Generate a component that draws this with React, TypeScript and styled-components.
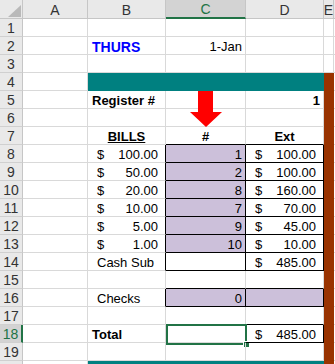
import React from "react";
import styled, { createGlobalStyle } from "styled-components";

const GlobalStyle = createGlobalStyle`
  html, body { margin: 0; padding: 0; background: #ffffff; overflow: hidden; }
  body { font-family: "Liberation Sans", Arial, sans-serif; }
`;

const GRID = "#d9d9d9";
const HEADER_BG = "#e9e9e9";
const HEADER_SEL = "#d3d3d3";
const HEADER_LINE = "#c6c6c6";
const EXCEL_GREEN = "#217346";
const TEAL = "#008080";
const BROWN = "#993300";
const LILAC = "#ccc0da";

type Col = "A" | "B" | "C" | "D" | "E" | "F";
const COLS: Col[] = ["A", "B", "C", "D", "E", "F"];

type CellDef = {
  text?: string;
  acct?: string;
  align?: "left" | "right" | "center";
  bold?: boolean;
  color?: string;
  underline?: boolean;
  indent?: number;
  size?: number;
  fill?: string;
  box?: boolean;
  selected?: boolean;
};

const acct = (v: string, box = true, fill?: string): CellDef => ({ acct: v, box, fill });
const num = (v: string): CellDef => ({ text: v, align: "right", box: true, fill: LILAC });

const brownE: Partial<Record<Col, CellDef>> = { E: { fill: BROWN } };

const SHEET: Record<number, Partial<Record<Col, CellDef>>> = {
  1: {},
  2: {
    B: { text: "THURS", bold: true, color: "#0000ff", size: 14 },
    C: { text: "1-Jan", align: "right" },
  },
  3: {},
  4: { B: { fill: TEAL }, C: { fill: TEAL }, D: { fill: TEAL }, ...brownE },
  5: {
    B: { text: "Register #", bold: true },
    D: { text: "1", bold: true, align: "right" },
    ...brownE,
  },
  6: { ...brownE },
  7: {
    B: { text: "BILLS", bold: true, underline: true, align: "center" },
    C: { text: "#", bold: true, align: "center" },
    D: { text: "Ext", bold: true, align: "center" },
    ...brownE,
  },
  8: { B: acct("100.00", false), C: num("1"), D: acct("100.00"), ...brownE },
  9: { B: acct("50.00", false), C: num("2"), D: acct("100.00"), ...brownE },
  10: { B: acct("20.00", false), C: num("8"), D: acct("160.00"), ...brownE },
  11: { B: acct("10.00", false), C: num("7"), D: acct("70.00"), ...brownE },
  12: { B: acct("5.00", false), C: num("9"), D: acct("45.00"), ...brownE },
  13: { B: acct("1.00", false), C: num("10"), D: acct("10.00"), ...brownE },
  14: {
    B: { text: "Cash Sub", indent: 9 },
    C: { box: true },
    D: acct("485.00"),
    ...brownE,
  },
  15: { ...brownE },
  16: {
    B: { text: "Checks", indent: 9 },
    C: num("0"),
    D: { box: true, fill: LILAC },
    ...brownE,
  },
  17: { ...brownE },
  18: {
    B: { text: "Total", bold: true },
    C: { selected: true },
    D: acct("485.00"),
    ...brownE,
  },
  19: { ...brownE },
  20: { B: { fill: TEAL }, C: { fill: TEAL }, D: { fill: TEAL }, ...brownE },
};

const ROWS = Array.from({ length: 20 }, (_, i) => i + 1);
const LAST_LABELLED_ROW = 19;
const SELECTED_ROW = 18;
const SELECTED_COL: Col = "C";

const getCell = (r: number, c: Col | undefined): CellDef => (c && SHEET[r]?.[c]) || {};

const Sheet = styled.div`
  position: relative;
  display: grid;
  grid-template-columns: 23px 65px 78px 80px 78px 10px 1fr;
  grid-auto-rows: 18px;
  grid-template-rows: 19px;
  width: 335px;
  height: 364px;
  overflow: hidden;
  background: #ffffff;
`;

const Corner = styled.div`
  position: relative;
  box-sizing: border-box;
  background: ${HEADER_BG};
  border-right: 1px solid ${HEADER_LINE};
  border-bottom: 1px solid ${HEADER_LINE};
  svg { position: absolute; right: 1px; bottom: 1px; }
`;

const ColHeader = styled.div<{ $selected?: boolean }>`
  box-sizing: border-box;
  display: flex;
  align-items: center;
  justify-content: center;
  padding-top: 1px;
  background: ${(p) => (p.$selected ? HEADER_SEL : HEADER_BG)};
  color: ${(p) => (p.$selected ? EXCEL_GREEN : "#333333")};
  border-right: 1px solid ${HEADER_LINE};
  border-bottom: ${(p) => (p.$selected ? `2px solid ${EXCEL_GREEN}` : `1px solid ${HEADER_LINE}`)};
  font-size: 14px;
  line-height: 14px;
  overflow: hidden;
`;

const RowHeader = styled.div<{ $selected?: boolean }>`
  box-sizing: border-box;
  display: flex;
  align-items: center;
  justify-content: center;
  background: ${(p) => (p.$selected ? HEADER_SEL : HEADER_BG)};
  color: ${(p) => (p.$selected ? EXCEL_GREEN : "#333333")};
  border-right: ${(p) => (p.$selected ? `2px solid ${EXCEL_GREEN}` : `1px solid ${HEADER_LINE}`)};
  border-bottom: 1px solid #d0d0d0;
  font-size: 14px;
  line-height: 14px;
`;

const Cell = styled.div<{
  $right: string;
  $bottom: string;
  $fill?: string;
  $align: "left" | "right" | "center";
  $bold?: boolean;
  $color?: string;
  $underline?: boolean;
  $indent: number;
  $size: number;
}>`
  position: relative;
  box-sizing: border-box;
  display: flex;
  align-items: flex-end;
  justify-content: ${(p) =>
    p.$align === "right" ? "flex-end" : p.$align === "center" ? "center" : "flex-start"};
  padding: 0 3px 0 ${(p) => p.$indent}px;
  background: ${(p) => p.$fill || "transparent"};
  border-right: 1px solid ${(p) => p.$right};
  border-bottom: 1px solid ${(p) => p.$bottom};
  color: ${(p) => p.$color || "#000000"};
  font-size: ${(p) => p.$size}px;
  font-weight: ${(p) => (p.$bold ? 700 : 400)};
  text-decoration: ${(p) => (p.$underline ? "underline" : "none")};
  line-height: 14px;
  white-space: nowrap;
`;

const Accounting = styled.div`
  flex: 1;
  display: flex;
  justify-content: space-between;
  padding: 0 4px 0 5px;
`;

const Selection = styled.div`
  position: absolute;
  top: -1px;
  left: 0;
  right: -2px;
  bottom: -3px;
  border: 2px solid ${EXCEL_GREEN};
  box-sizing: border-box;
  pointer-events: none;
`;

const FillHandle = styled.div`
  position: absolute;
  right: -4px;
  bottom: -4px;
  width: 5px;
  height: 5px;
  background: ${EXCEL_GREEN};
  box-shadow: 0 0 0 1px #ffffff;
`;

const ArrowShape = styled.svg`
  position: absolute;
  left: 190px;
  top: 91px;
`;

function borderColors(r: number, ci: number) {
  const c = COLS[ci];
  const cell = getCell(r, c);
  const right = getCell(r, COLS[ci + 1]);
  const below = getCell(r + 1, c);
  let rightColor = GRID;
  let bottomColor = GRID;
  if (cell.box || right.box) rightColor = "#000000";
  else if (cell.fill) rightColor = cell.fill;
  if (cell.box || below.box) bottomColor = "#000000";
  else if (cell.fill) bottomColor = cell.fill;
  return { rightColor, bottomColor };
}

function SheetCell({ r, ci }: { r: number; ci: number }) {
  const cell = getCell(r, COLS[ci]);
  const { rightColor, bottomColor } = borderColors(r, ci);
  const align = cell.align || "left";
  const indent = cell.indent ?? (align === "left" ? 4 : 3);
  return (
    <Cell
      $right={rightColor}
      $bottom={bottomColor}
      $fill={cell.fill}
      $align={align}
      $bold={cell.bold}
      $color={cell.color}
      $underline={cell.underline}
      $indent={indent}
      $size={cell.size || 13}
    >
      {cell.acct !== undefined ? (
        <Accounting>
          <span>$</span>
          <span>{cell.acct}</span>
        </Accounting>
      ) : (
        cell.text
      )}
      {cell.selected && (
        <Selection>
          <FillHandle />
        </Selection>
      )}
    </Cell>
  );
}

export default function App() {
  return (
    <>
      <GlobalStyle />
      <Sheet>
        <Corner>
          <svg width="13" height="12" viewBox="0 0 13 12">
            <polygon points="0,12 13,12 13,0" fill="#b9b9b9" />
          </svg>
        </Corner>
        {COLS.map((c) => (
          <ColHeader key={c} $selected={c === SELECTED_COL}>
            {c === "F" ? "" : c}
          </ColHeader>
        ))}
        {ROWS.map((r) => (
          <React.Fragment key={r}>
            <RowHeader $selected={r === SELECTED_ROW}>
              {r <= LAST_LABELLED_ROW ? r : ""}
            </RowHeader>
            {COLS.map((c, ci) => (
              <SheetCell key={c} r={r} ci={ci} />
            ))}
          </React.Fragment>
        ))}
        <ArrowShape width="32" height="36" viewBox="0 0 32 36">
          <polygon points="8,0 23,0 23,21 32,21 16,36 0,21 8,21" fill="#ff0000" />
        </ArrowShape>
      </Sheet>
    </>
  );
}
